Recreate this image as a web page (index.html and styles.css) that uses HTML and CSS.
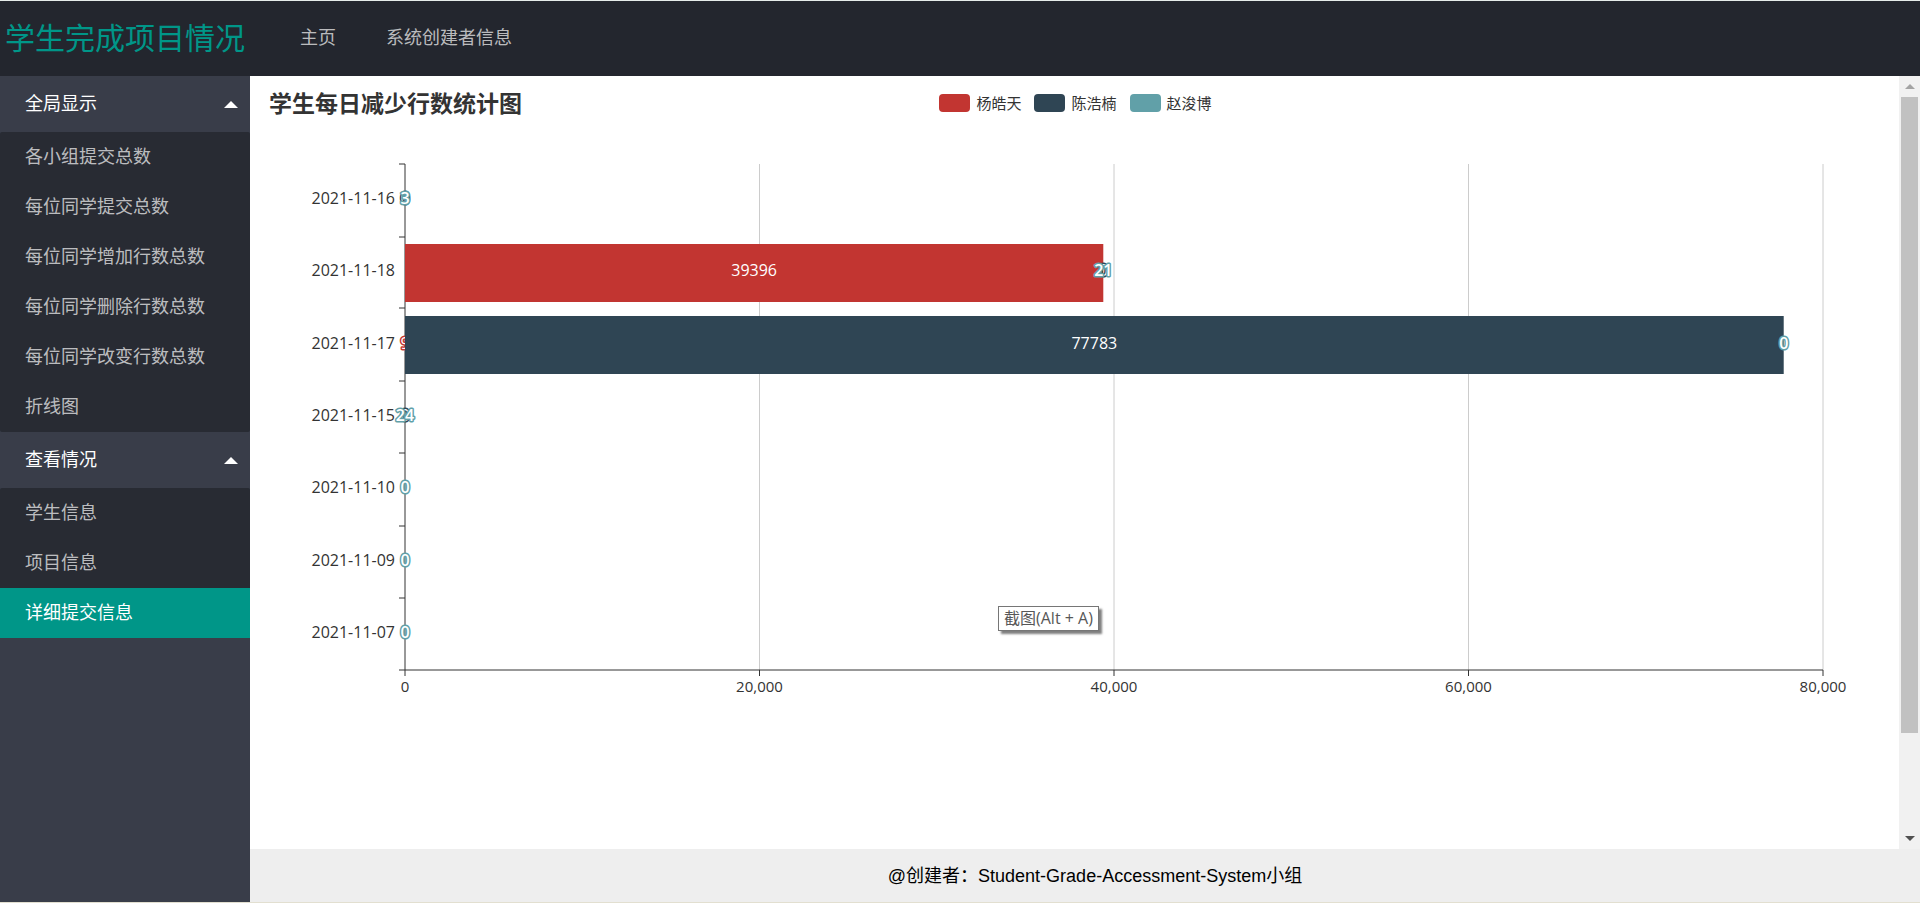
FILE: index.html
```html
<!DOCTYPE html>
<html lang="zh-CN">
<head>
<meta charset="utf-8">
<title>学生完成项目情况</title>
<link rel="stylesheet" href="styles.css">
</head>
<body>
<header class="header">
  <h1 class="logo">学生完成项目情况</h1>
  <nav class="top-nav">
    <a href="#home">主页</a>
    <a href="#creators">系统创建者信息</a>
  </nav>
</header>
<div class="body">
  <nav class="side">
    <button class="group" type="button" aria-expanded="true">全局显示<span class="caret"></span></button>
    <ul class="items">
      <li><a href="#g1">各小组提交总数</a></li>
      <li><a href="#g2">每位同学提交总数</a></li>
      <li><a href="#g3">每位同学增加行数总数</a></li>
      <li><a href="#g4">每位同学删除行数总数</a></li>
      <li><a href="#g5">每位同学改变行数总数</a></li>
      <li><a href="#g6">折线图</a></li>
    </ul>
    <button class="group" type="button" aria-expanded="true">查看情况<span class="caret"></span></button>
    <ul class="items">
      <li><a href="#s1">学生信息</a></li>
      <li><a href="#s2">项目信息</a></li>
      <li><a class="active" href="#s3">详细提交信息</a></li>
    </ul>
  </nav>
  <div class="content">
    <div class="viewport">
      <main class="chart">
        <div class="chart-head">
          <h2 class="chart-title">学生每日减少行数统计图</h2>
          <div class="legend">
            <button type="button" class="key"><span class="swatch red"></span>杨皓天</button>
            <button type="button" class="key"><span class="swatch navy"></span>陈浩楠</button>
            <button type="button" class="key"><span class="swatch teal"></span>赵浚博</button>
          </div>
        </div>
        <div class="plot">
          <svg class="plot-svg" role="img" aria-label="学生每日减少行数统计图">
            <g class="grid">
              <line x1="25%" x2="25%" y1="0" y2="506"/>
              <line x1="50%" x2="50%" y1="0" y2="506"/>
              <line x1="75%" x2="75%" y1="0" y2="506"/>
              <line x1="100%" x2="100%" y1="0" y2="506"/>
            </g>
            <g class="axis">
              <line x1="0" x2="0" y1="0" y2="512"/>
              <line x1="-6" x2="100%" y1="506" y2="506"/>
              <line x1="-6" x2="0" y1="0" y2="0"/>
              <line x1="-6" x2="0" y1="73" y2="73"/>
              <line x1="-6" x2="0" y1="144" y2="144"/>
              <line x1="-6" x2="0" y1="217" y2="217"/>
              <line x1="-6" x2="0" y1="289" y2="289"/>
              <line x1="-6" x2="0" y1="362" y2="362"/>
              <line x1="-6" x2="0" y1="434" y2="434"/>
              <line x1="25%" x2="25%" y1="506" y2="512"/>
              <line x1="50%" x2="50%" y1="506" y2="512"/>
              <line x1="75%" x2="75%" y1="506" y2="512"/>
              <line x1="100%" x2="100%" y1="506" y2="512"/>
            </g>
            <g class="dates">
              <text x="-10" y="40">2021-11-16</text>
              <text x="-10" y="112">2021-11-18</text>
              <text x="-10" y="185">2021-11-17</text>
              <text x="-10" y="257">2021-11-15</text>
              <text x="-10" y="329">2021-11-10</text>
              <text x="-10" y="402">2021-11-09</text>
              <text x="-10" y="474">2021-11-07</text>
            </g>
            <g class="ticks">
              <text x="0" y="528">0</text>
              <text x="25%" y="528">20,000</text>
              <text x="50%" y="528">40,000</text>
              <text x="75%" y="528">60,000</text>
              <text x="100%" y="528">80,000</text>
            </g>
            <rect class="fill-red" x="0" y="80" width="49.245%" height="58"/>
            <g class="values on-red">
              <text x="0" y="185">9</text>
            </g>
            <rect class="fill-navy" x="0" y="152" width="97.229%" height="58"/>
            <g class="values on-navy">
              <text x="0" y="40">0</text>
              <text x="49.245%" y="112">0</text>
              <text x="0" y="257">0</text>
            </g>
            <g class="values on-teal">
              <text x="0" y="40">3</text>
              <text x="49.245%" y="112">21</text>
              <text x="97.229%" y="185">0</text>
              <text x="0" y="257">24</text>
              <text x="0" y="329">0</text>
              <text x="0" y="402">0</text>
              <text x="0" y="474">0</text>
            </g>
            <g class="values">
              <text x="24.622%" y="112">39396</text>
              <text x="48.614%" y="185">77783</text>
            </g>
          </svg>
          <div class="tip" role="tooltip">截图(Alt + A)</div>
        </div>
      </main>
      <div class="scrollbar" aria-hidden="true">
        <div class="scroll-end"><span class="arrow up"></span></div>
        <div class="track"><div class="thumb"></div></div>
        <div class="scroll-end"><span class="arrow down"></span></div>
      </div>
    </div>
    <footer class="footer">@创建者：Student-Grade-Accessment-System小组</footer>
  </div>
</div>
</body>
</html>
```
FILE: styles.css
```css
* { box-sizing: border-box; }

body {
  margin: 0;
  min-height: 100vh;
  display: flex;
  flex-direction: column;
  border-top: 1px solid #e6ecea;
  border-bottom: 1px solid #e2dfd0;
  background: #fff;
  font: 18px/24px "Liberation Sans", "Noto Sans CJK SC", sans-serif;
}

h1, h2, ul { margin: 0; padding: 0; }
ul { list-style: none; }
a { color: inherit; text-decoration: none; }
button { border: 0; background: none; font: inherit; cursor: pointer; }

.header {
  display: flex;
  align-items: center;
  height: 75px;
  background: #23262e;
}
.logo {
  width: 250px;
  text-align: center;
  color: #009688;
  font-size: 30px;
  line-height: 40px;
  font-weight: 400;
}
.top-nav {
  display: flex;
  gap: 50px;
  padding: 0 0 2px 50px;
  color: rgba(255, 255, 255, 0.7);
}

.body { display: flex; flex: 1; }
.side {
  flex: none;
  width: 250px;
  background: #393d49;
  color: rgba(255, 255, 255, 0.7);
}
.group {
  display: flex;
  align-items: center;
  justify-content: space-between;
  width: 100%;
  height: 56px;
  padding: 0 12px 0 25px;
  color: #fff;
}
.caret {
  border: 7px solid transparent;
  border-top: 0;
  border-bottom-color: #fff;
}
.items {
  border-radius: 2px;
  background: #282b33;
}
.items a {
  display: block;
  padding: 13px 25px;
}
.items .active {
  background: #009688;
  color: #fff;
}

.content {
  flex: 1;
  min-width: 0;
  display: flex;
  flex-direction: column;
}
.viewport { flex: 1; display: flex; }
.chart {
  flex: 1;
  min-width: 0;
  font-family: "Open Sans", "Noto Sans CJK SC", sans-serif;
}
.chart-head {
  display: grid;
  grid-template-columns: 1fr auto 1fr;
  align-items: center;
  padding: 11px 17px 0 19px;
}
.chart-title {
  color: #333;
  font-size: 23px;
  line-height: 32px;
  font-weight: 700;
}
.legend { display: flex; gap: 13px; }
.key {
  display: flex;
  align-items: center;
  gap: 6px;
  padding: 0;
  color: #333;
  font-size: 15px;
  line-height: 20px;
}
.swatch { width: 31px; height: 18px; border-radius: 4px; }
.red { background: #c23531; }
.navy { background: #2f4554; }
.teal { background: #61a0a8; }

.plot {
  position: relative;
  margin: 45px 76px 0 155px;
}
.plot-svg {
  display: block;
  width: 100%;
  height: 540px;
  overflow: visible;
  font-size: 15px;
}
.grid line { stroke: #ccc; }
.axis line { stroke: #333; }
.dates { fill: #333; font-size: 16px; text-anchor: end; }
.ticks { fill: #333; text-anchor: middle; }
.fill-red { fill: #c23531; }
.fill-navy { fill: #2f4554; }
.values {
  fill: #fff;
  font-size: 16px;
  text-anchor: middle;
  stroke-width: 3px;
  stroke-linejoin: round;
  paint-order: stroke;
}
.on-red { stroke: #c23531; }
.on-navy { stroke: #2f4554; }
.on-teal { stroke: #61a0a8; font-weight: 600; }

.tip {
  position: absolute;
  left: 593px;
  top: 442px;
  padding: 0 5px 1px;
  border: 1px solid #767676;
  background: #fff;
  box-shadow: 3px 3px 2px rgba(0, 0, 0, 0.5);
  color: #575757;
  font-size: 16px;
  line-height: 22px;
  white-space: nowrap;
}

.scrollbar {
  display: flex;
  flex-direction: column;
  width: 21px;
  background: #f1f1f1;
}
.scroll-end {
  display: flex;
  align-items: center;
  justify-content: center;
  height: 21px;
}
.arrow { border: 5px solid transparent; }
.up { border-top: 0; border-bottom-color: #a3a3a3; }
.down { border-bottom: 0; border-top-color: #505050; }
.track { flex: 1; padding: 0 2px; display: flex; }
.thumb { width: 100%; height: 87%; background: #c1c1c1; }

.footer {
  padding: 15px 0 14px 20px;
  background: #eee;
  color: #000;
  text-align: center;
}
```
